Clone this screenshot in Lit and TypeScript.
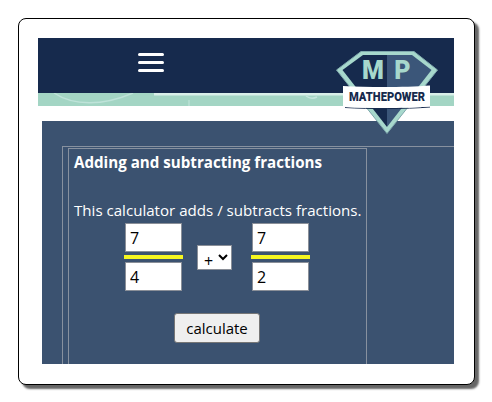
import { LitElement, html, css, svg } from "lit";
import { customElement } from "lit/decorators.js";

const logo = svg`
  <svg class="logo" viewBox="0 0 104 86" width="104" height="86" aria-label="Mathepower logo">
    <path d="M26 2.500 H79 L102.500 21 L52 84.500 L1.500 21 Z" fill="#a7d8cc" stroke="#7fa9ad" stroke-width="1"/>
    <path d="M28 6 H52 V78 L7.500 21 Z" fill="#162a4d"/>
    <path d="M52 6 H77 L96.500 21 L52 78 Z" fill="#3b5679"/>
    <text x="38" y="30" class="mp" text-anchor="middle">M</text>
    <text x="67.500" y="30" class="mp" text-anchor="middle">P</text>
    <path d="M10 58.500 C35 60 70 60 95 58" fill="none" stroke="#162a4d" stroke-width="1"/>
    <path d="M8 37 C35 38.500 70 38.500 95 36.500 V57.500 C70 59.500 35 59.500 8 58 Z" fill="#fff"/>
    <text x="52" y="51.500" class="brand" text-anchor="middle" textLength="76" lengthAdjust="spacingAndGlyphs">MATHEPOWER</text>
  </svg>`;

@customElement("app-root")
export class AppRoot extends LitElement {
  static styles = css`
    :host {
      display: block;
      width: 492px;
      height: 402px;
      overflow: hidden;
      background: #fff;
      font-family: "Open Sans", "Noto Sans", sans-serif;
    }
    .card {
      box-sizing: border-box;
      margin: 18px 0 0 18px;
      width: 457px;
      height: 367px;
      padding: 19px 20px 20px 19px;
      background: #fff;
      border: 1px solid #000;
      border-radius: 8px;
      box-shadow: 4px 4px 2px #666;
    }
    .head {
      position: relative;
      height: 68px;
      display: flex;
      flex-direction: column;
    }
    .navy {
      height: 55px;
      background: #162a4d;
      display: flex;
      align-items: center;
      padding-left: 100px;
    }
    .burger {
      display: flex;
      flex-direction: column;
      gap: 5px;
      width: 26px;
      margin-top: -6px;
    }
    .burger span {
      height: 3px;
      border-radius: 2px;
      background: #fff;
    }
    .band {
      display: block;
      height: 13px;
      width: 416px;
    }
    .logo {
      position: absolute;
      left: 297px;
      top: 11px;
    }
    .mp {
      font: 900 25px Roboto, sans-serif;
      fill: #a7d8cc;
    }
    .brand {
      font: 900 12.500px Roboto, sans-serif;
      fill: #162a4d;
    }
    .main {
      margin: 15px 0 0 4px;
      height: 243px;
      background: #3b5270;
      overflow: hidden;
      padding: 25px 0 0 20px;
      box-sizing: border-box;
    }
    .outer {
      border: 1px solid #87919f;
      border-bottom: 0;
      border-right: 0;
      margin-right: -1px;
      padding: 1px 0 0 5px;
      height: 300px;
    }
    .inner {
      box-sizing: border-box;
      width: 299px;
      height: 300px;
      border: 1px solid #87919f;
      padding: 0 5px;
      color: #fff;
      font-size: 16px;
    }
    .title {
      margin: 0;
      font-size: 15.150px;
      font-weight: 700;
      line-height: 26px;
    }
    .lead {
      margin: 24px 0 0;
      line-height: 22px;
      font-size: 15.100px;
      white-space: nowrap;
    }
    .calc {
      display: flex;
      align-items: center;
      margin: 2px 0 0 50px;
    }
    .frac {
      display: flex;
      flex-direction: column;
      align-items: center;
      gap: 3px;
      width: 59px;
    }
    .frac input {
      box-sizing: border-box;
      width: 57px;
      height: 29px;
      border: 1px solid #8a8f98;
      padding: 0 4px;
      background: #fff;
      color: #000;
      font: 16px "Open Sans", sans-serif;
      outline: none;
    }
    .bar {
      width: 59px;
      height: 4px;
      background: #f6f620;
    }
    select {
      box-sizing: border-box;
      width: 35px;
      height: 25px;
      margin: 0 19px 0 14px;
      padding: 3px 0 0 2px;
      background: #fff;
      border: 1px solid #8a8f98;
      color: #000;
      font: 16px "Open Sans", sans-serif;
    }
    .submit {
      display: block;
      box-sizing: border-box;
      width: 86px;
      height: 30px;
      margin: 22px 0 0 100px;
      padding: 0;
      background: #efefef;
      border: 1px solid #767676;
      border-radius: 3px;
      color: #000;
      font: 15px "Open Sans", sans-serif;
    }
  `;

  render() {
    return html`
      <div class="card">
        <div class="head">
          <div class="navy">
            <div class="burger"><span></span><span></span><span></span></div>
          </div>
          <svg class="band" viewBox="0 0 416 13" preserveAspectRatio="none">
            <rect width="416" height="13" fill="#a3d5c4" />
            <rect x="116" width="300" height="2.500" fill="#d9efe9" />
            <path d="M16 0 C35 13 65 13 95 0" fill="none" stroke="#bfe3d9" stroke-width="1.500" />
            <path d="M151 7 V13" stroke="#c5e6dd" stroke-width="1" />
            <path d="M268 3 C272 6 275 6 279 4 M315 2 C318 5 322 5 325 2" fill="none" stroke="#c5e6dd" stroke-width="1.500" />
          </svg>
          ${logo}
        </div>
        <div class="main">
          <div class="outer">
            <div class="inner">
              <h1 class="title">Adding and subtracting fractions</h1>
              <p class="lead">This calculator adds / subtracts fractions.</p>
              <div class="calc">
                <div class="frac">
                  <input .value=${"7"} aria-label="first numerator" />
                  <div class="bar"></div>
                  <input .value=${"4"} aria-label="first denominator" />
                </div>
                <select aria-label="operation">
                  <option>+</option>
                  <option>-</option>
                </select>
                <div class="frac">
                  <input .value=${"7"} aria-label="second numerator" />
                  <div class="bar"></div>
                  <input .value=${"2"} aria-label="second denominator" />
                </div>
              </div>
              <button class="submit">calculate</button>
            </div>
          </div>
        </div>
      </div>
    `;
  }
}
